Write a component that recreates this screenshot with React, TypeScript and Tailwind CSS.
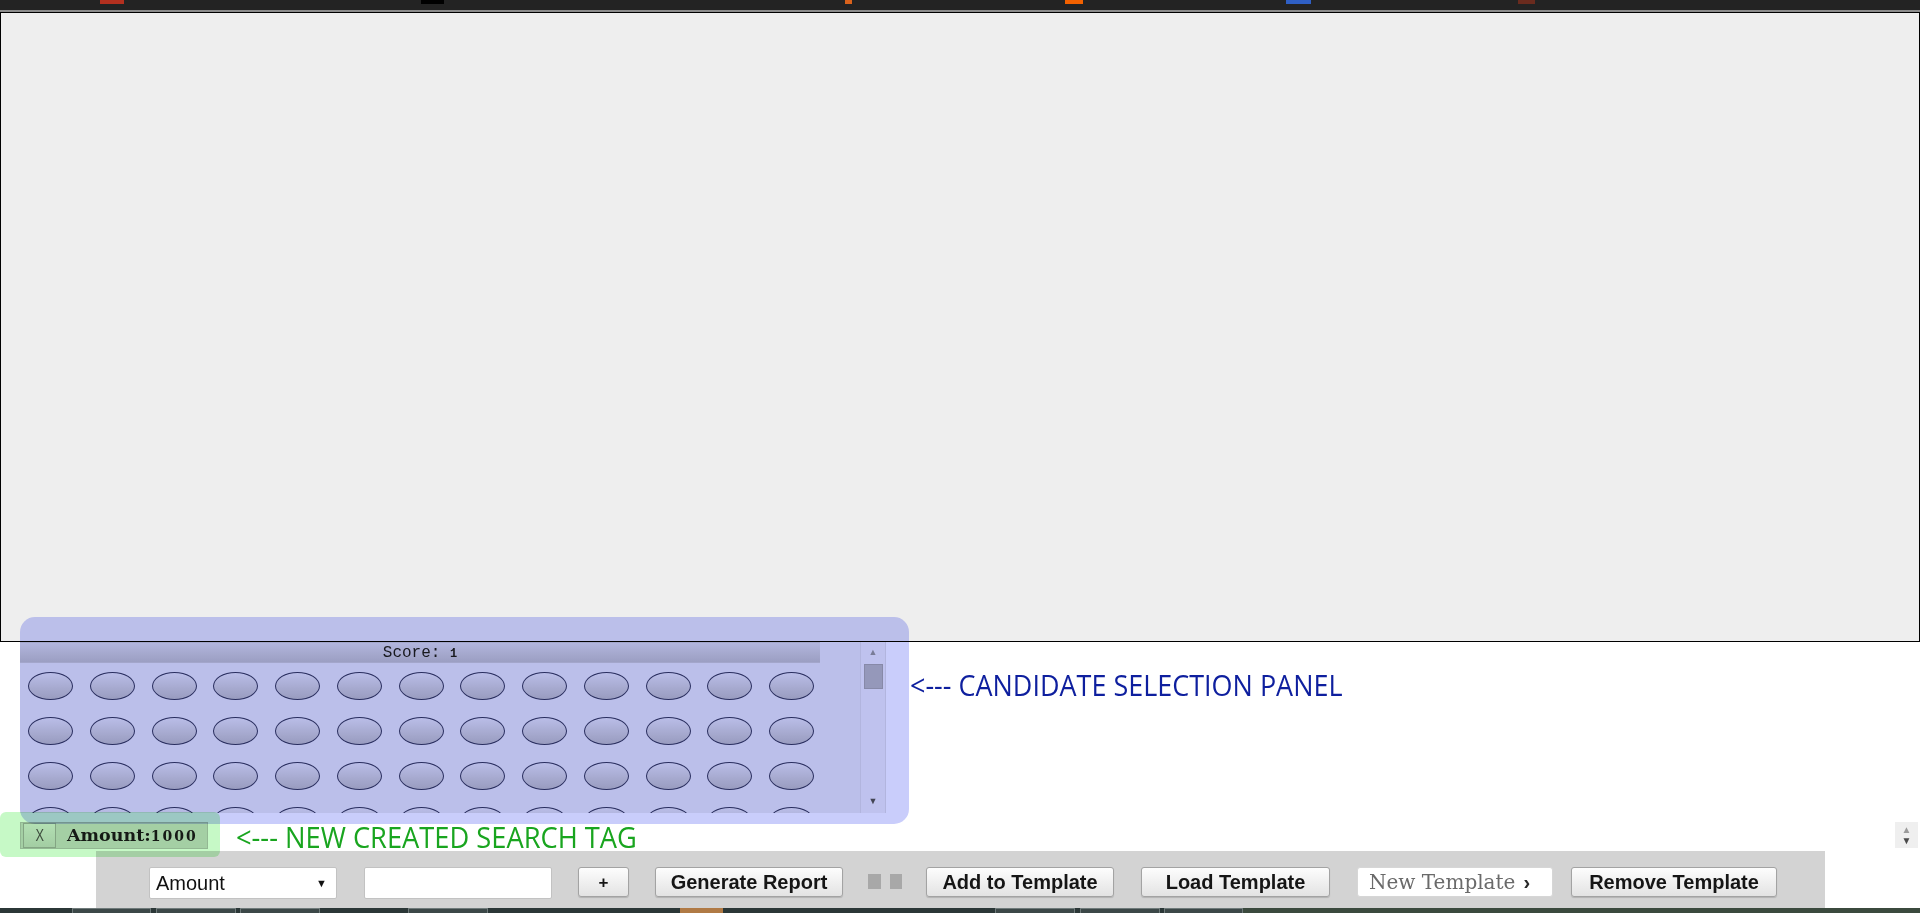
import React from "react";

const COLS = 13;
const ROWS = 4;

function Ellipse() {
  return (
    <div className="w-[45px] h-[28px] rounded-[50%] border-[1.5px] border-[#333860] bg-linear-to-b from-[#ececec] to-[#c2c2c2]" />
  );
}

function Btn({ w, children }: { w: string; children: React.ReactNode }) {
  return (
    <div
      className={`${w} h-[30px] shrink-0 flex items-center justify-center rounded-[3px] border border-[#a3a3a3] bg-linear-to-b from-[#fdfdfd] to-[#e3e3e3] shadow-[0_1px_1px_rgba(0,0,0,0.15)] text-[20px] font-bold leading-none text-[#151515] font-['Liberation_Sans',Arial,sans-serif]`}
    >
      {children}
    </div>
  );
}

export default function App() {
  const cells = Array.from({ length: COLS * ROWS });
  return (
    <div className="relative isolate w-[1920px] h-[913px] overflow-hidden bg-white flex flex-col font-['Liberation_Sans',Arial,sans-serif]">
      {/* top browser strip */}
      <div className="h-[10px] shrink-0 bg-[#232323] flex items-start">
        <div className="ml-[100px] w-[24px] h-[4px] bg-[#b3301f]" />
        <div className="ml-[297px] w-[23px] h-[4px] bg-black" />
        <div className="ml-[401px] w-[7px] h-[4px] bg-[#d9621c]" />
        <div className="ml-[213px] w-[18px] h-[4px] bg-[#f26100]" />
        <div className="ml-[203px] w-[25px] h-[4px] bg-[#2f5fc4]" />
        <div className="ml-[207px] w-[17px] h-[4px] bg-[#6a2b1e]" />
      </div>
      <div className="h-[2px] shrink-0 bg-[#8c8c8c]" />

      {/* main gray canvas */}
      <div className="h-[630px] shrink-0 bg-[#eeeeee] border border-black" />

      {/* candidate selection row */}
      <div className="h-[171px] shrink-0 flex">
        <div className="ml-[20px] w-[866px] h-full bg-[#eeeeee] flex">
          <div className="w-[840px] h-full flex flex-col overflow-hidden">
            <div className="w-[800px] h-[21px] shrink-0 flex items-center justify-center bg-linear-to-b from-[#e2e2e2] to-[#c5c5c5] border-y border-[#cfcfcf]">
              <span className="font-['Liberation_Mono',monospace] text-[16px] leading-none text-[#1e1e1e]">
                Score: <span className="text-[12px] font-bold">1</span>
              </span>
            </div>
            <div className="pt-[9px] pl-[8px] grid grid-cols-[repeat(13,45px)] gap-x-[16.75px] gap-y-[17px]">
              {cells.map((_, i) => (
                <Ellipse key={i} />
              ))}
            </div>
          </div>
          {/* scrollbar */}
          <div className="w-[26px] h-full flex flex-col items-center bg-[#f2f2f2] border-x border-[#e2e2e2]">
            <div className="h-[22px] flex items-center justify-center text-[9px] text-[#9a9a9a]">▲</div>
            <div className="w-[19px] h-[25px] bg-[#bdbdbd] border border-[#ababab]" />
            <div className="flex-1" />
            <div className="h-[22px] flex items-center justify-center text-[9px] text-[#555]">▼</div>
          </div>
        </div>
        <div className="ml-[24px] mt-[28px] h-[29px] leading-[29px] text-[29px] whitespace-nowrap text-[#0e1f9e] font-['Open_Sans',sans-serif] origin-left scale-x-[0.93]">
          &lt;--- CANDIDATE SELECTION PANEL
        </div>
      </div>

      {/* tag row */}
      <div className="h-[38px] shrink-0 flex items-start">
        <div className="ml-[20px] mt-[9px] w-[188px] h-[27px] flex items-center bg-[#d4d4d4] border border-[#bdbdbd]">
          <div className="ml-[2px] w-[33px] h-[25px] flex items-center justify-center bg-linear-to-b from-[#e6e6e6] to-[#d2d2d2] border border-[#a9a9a9] text-[17px] leading-none text-[#505050]">
            <span className="inline-block scale-x-75">X</span>
          </div>
          <div className="ml-[11px] font-['DejaVu_Serif',serif] font-bold text-[17.5px] leading-none text-[#1a1a1a] whitespace-nowrap">
            Amount:<span className="text-[14px] tracking-[2px]">1000</span>
          </div>
        </div>
        <div className="ml-[28px] mt-[9px] h-[29px] leading-[29px] text-[29px] whitespace-nowrap text-[#19a51f] font-['Open_Sans',sans-serif] origin-left scale-x-[0.94]">
          &lt;--- NEW CREATED SEARCH TAG
        </div>
        <div className="flex-1" />
        <div className="mt-[9px] mr-[2px] w-[23px] h-[26px] bg-[#efefef] flex flex-col items-center justify-center text-[10px] leading-[11px]">
          <span className="text-[#9b9b9b]">▲</span>
          <span className="text-[#4a4a4a]">▼</span>
        </div>
      </div>

      {/* toolbar */}
      <div className="h-[57px] shrink-0 flex">
        <div className="ml-[96px] w-[1729px] h-full bg-[#d3d3d3] flex items-start pt-[16px] pl-[53px]">
          <div className="w-[188px] h-[32px] shrink-0 flex items-center justify-between bg-white border border-[#c2c2c2] rounded-[2px] pl-[6px] pr-[9px]">
            <span className="text-[20px] leading-none text-[#111]">Amount</span>
            <span className="text-[11px] text-[#111]">▼</span>
          </div>
          <div className="ml-[27px] w-[188px] h-[32px] shrink-0 bg-white border border-[#c2c2c2] rounded-[2px]" />
          <div className="ml-[26px]">
            <Btn w="w-[51px]">
              <span className="text-[17px]">+</span>
            </Btn>
          </div>
          <div className="ml-[26px]">
            <Btn w="w-[188px]">Generate Report</Btn>
          </div>
          <div className="ml-[25px] mt-[7px] flex gap-[9px]">
            <div className="w-[13px] h-[15px] bg-[#a8a8a8]" />
            <div className="w-[12px] h-[15px] bg-[#a8a8a8]" />
          </div>
          <div className="ml-[24px]">
            <Btn w="w-[188px]">Add to Template</Btn>
          </div>
          <div className="ml-[27px]">
            <Btn w="w-[189px]">Load Template</Btn>
          </div>
          <div className="ml-[27px] w-[196px] h-[30px] shrink-0 flex items-center bg-white border border-[#d6d6d6] rounded-[3px] pl-[11px]">
            <span className="font-['DejaVu_Serif',serif] text-[20px] leading-none text-[#6a6a6a] whitespace-nowrap">
              New Template
            </span>
            <span className="ml-[8px] text-[20px] font-bold leading-none text-[#2a2a2a]">›</span>
          </div>
          <div className="ml-[18px]">
            <Btn w="w-[206px]">Remove Template</Btn>
          </div>
        </div>
      </div>

      {/* taskbar edge */}
      <div className="h-[5px] shrink-0 bg-[#2b3737] flex items-start">
        <div className="ml-[72px] w-[79px] h-[5px] border-t border-x border-[#6f7a7a] bg-[#3c4848]" />
        <div className="ml-[5px] w-[80px] h-[5px] border-t border-x border-[#6f7a7a] bg-[#3c4848]" />
        <div className="ml-[4px] w-[80px] h-[5px] border-t border-x border-[#6f7a7a] bg-[#3c4848]" />
        <div className="ml-[88px] w-[80px] h-[5px] border-t border-x border-[#6f7a7a] bg-[#3c4848]" />
        <div className="ml-[192px] w-[43px] h-[5px] bg-[#b07a45]" />
        <div className="ml-[272px] w-[80px] h-[5px] border-t border-x border-[#6f7a7a] bg-[#3c4848]" />
        <div className="ml-[5px] w-[80px] h-[5px] border-t border-x border-[#6f7a7a] bg-[#3c4848]" />
        <div className="ml-[4px] w-[79px] h-[5px] border-t border-x border-[#6f7a7a] bg-[#3c4848]" />
        <div className="flex-1 h-[5px] bg-[#3b4a3e]" />
      </div>

      {/* annotation overlays */}
      <div className="pointer-events-none absolute left-[20px] top-[617px] w-[889px] h-[207px] rounded-[15px] bg-[#c9cdfb] mix-blend-multiply" />
      <div className="pointer-events-none absolute left-0 top-[812px] w-[220px] h-[45px] rounded-[6px] bg-[#c6f9c6] mix-blend-multiply" />
    </div>
  );
}
